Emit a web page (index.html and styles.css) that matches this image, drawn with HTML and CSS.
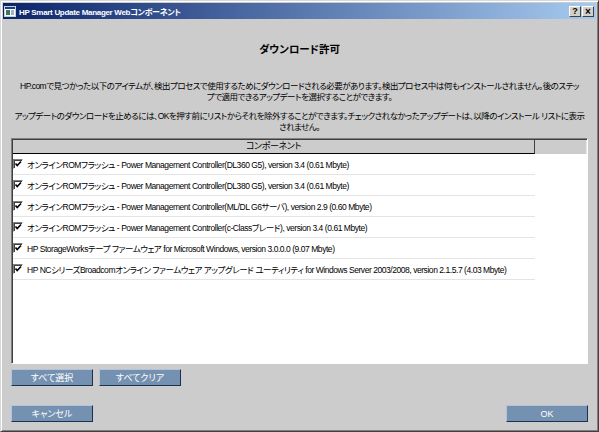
FILE: index.html
```html
<!DOCTYPE html>
<html lang="ja">

<head>
    <meta charset="UTF-8">
    <title>HP Smart Update Manager Webコンポーネント</title>
    <link rel="stylesheet" href="styles.css">
</head>

<body>
    <div class="window">
        <!-- Title bar -->
        <div class="titlebar">
            <svg class="app-icon" width="12" height="11" viewBox="0 0 12 11">
                <rect x="0.5" y="0.5" width="11" height="10" fill="#ffffff" stroke="#c8d0d8"/>
                <rect x="1" y="1" width="10" height="2" fill="#1a3c8c"/>
                <rect x="2" y="4" width="4" height="5" fill="#3a7a5a"/>
                <rect x="7" y="4" width="3" height="5" fill="#9cb4d0"/>
            </svg>
            <span class="title">HP Smart Update Manager Webコンポーネント</span>
            <div class="caption-buttons">
                <span class="cap-btn">?</span>
                <span class="cap-btn close">×</span>
            </div>
        </div>

        <div class="content">
            <h1>ダウンロード許可</h1>

            <p class="msg">HP.comで見つかった以下のアイテムが、検出プロセスで使用するためにダウンロードされる必要があります。検出プロセス中は何もインストールされません。後のステッ<br>プで適用できるアップデートを選択することができます。</p>
            <p class="msg">アップデートのダウンロードを止めるには、OKを押す前にリストからそれを除外することができます。チェックされなかったアップデートは、以降のインストール リストに表示<br>されません。</p>

            <div class="list">
                <div class="list-head">
                    <div class="col-name">コンポーネント</div>
                    <div class="col-rest"></div>
                </div>
                <div class="list-body">
                    <div class="row"><span class="check"></span>オンラインROMフラッシュ - Power Management Controller(DL360 G5), version 3.4 (0.61 Mbyte)</div>
                    <div class="row"><span class="check"></span>オンラインROMフラッシュ - Power Management Controller(DL380 G5), version 3.4 (0.61 Mbyte)</div>
                    <div class="row"><span class="check"></span>オンラインROMフラッシュ - Power Management Controller(ML/DL G6サーバ), version 2.9 (0.60 Mbyte)</div>
                    <div class="row"><span class="check"></span>オンラインROMフラッシュ - Power Management Controller(c-Classブレード), version 3.4 (0.61 Mbyte)</div>
                    <div class="row"><span class="check"></span>HP StorageWorksテープ ファームウェア for Microsoft Windows, version 3.0.0.0 (9.07 Mbyte)</div>
                    <div class="row"><span class="check"></span>HP NCシリーズBroadcomオンライン ファームウェア アップグレード ユーティリティ for Windows Server 2003/2008, version 2.1.5.7 (4.03 Mbyte)</div>
                </div>
            </div>

            <div class="select-buttons">
                <button class="btn">すべて選択</button>
                <button class="btn">すべてクリア</button>
            </div>

            <div class="footer">
                <button class="btn">キャンセル</button>
                <button class="btn">OK</button>
            </div>
        </div>
    </div>
</body>

</html>
```

FILE: styles.css
```css
/* Page */

body {
    margin: 0;
    font-family: 'Liberation Sans', 'Noto Sans CJK JP', sans-serif;
    font-feature-settings: "palt";
    font-size: 9px;
    letter-spacing: -0.35px;
    color: #000;
}

/* Dialog frame */

.window {
    width: 599px;
    height: 432px;
    box-sizing: border-box;
    background-color: #cccccc;
    border: 1px solid;
    border-color: #d8d8d8 #404040 #404040 #d8d8d8;
    box-shadow: inset 1px 1px #ffffff, inset -1px -1px #808080;
    padding: 2px;
    display: flex;
    flex-direction: column;
}

/* Title bar */

.titlebar {
    height: 16px;
    display: flex;
    align-items: center;
    padding: 0 2px 0 1px;
    background: linear-gradient(to right, #0a246a, #a6caf0);
    color: #fff;
    font-size: 8px;
    font-weight: bold;
    letter-spacing: -0.3px;
}

.app-icon {
    margin-right: 3px;
}

.title {
    flex: 1;
    white-space: nowrap;
}

.caption-buttons {
    display: flex;
    gap: 1px;
}

.cap-btn {
    width: 10px;
    height: 9px;
    background-color: #d4d0c8;
    border: 1px solid;
    border-color: #ffffff #404040 #404040 #ffffff;
    color: #000;
    font-size: 9px;
    line-height: 9px;
    letter-spacing: 0;
    text-align: center;
}

.cap-btn.close {
    font-size: 10px;
}

/* Content */

.content {
    flex: 1;
    display: flex;
    flex-direction: column;
    padding: 0 8px;
}

h1 {
    margin: 23px 0 0;
    font-size: 10.5px;
    line-height: 14px;
    letter-spacing: 0;
    text-align: center;
}

.msg {
    margin: 25px -4px 0;
    font-size: 8.5px;
    line-height: 11px;
    letter-spacing: -0.5px;
    text-align: center;
    white-space: nowrap;
}

.msg + .msg {
    margin-top: 8px;
}

/* Component list */

.list {
    margin-top: 5px;
    height: 226px;
    box-sizing: border-box;
    border: 1px solid;
    border-color: #808080 #ffffff #ffffff #808080;
    box-shadow: inset 1px 1px #404040;
    padding: 1px 0 0 1px;
    background-color: #ffffff;
    display: flex;
    flex-direction: column;
}

.list-head {
    display: flex;
    height: 14px;
    background-color: #cccccc;
}

.col-name {
    width: 522px;
    box-sizing: border-box;
    border-right: 1px solid #404040;
    border-bottom: 1px solid #000;
    text-align: center;
    line-height: 13px;
}

.col-rest {
    flex: 1;
    border-right: 1px solid #e8e8e8;
}

.row {
    width: 522px;
    height: 20px;
    border-bottom: 1px solid #e4e4e4;
    display: flex;
    align-items: center;
    white-space: nowrap;
    font-size: 8.5px;
    letter-spacing: -0.45px;
}

.check {
    width: 8px;
    height: 8px;
    margin: 0 4px 0 0;
    border: 1px solid;
    border-color: #808080 #ffffff #ffffff #808080;
    box-shadow: inset 1px 1px #404040;
    background: #fff url("data:image/svg+xml;utf8,<svg xmlns='http://www.w3.org/2000/svg' width='8' height='8'><path d='M1.5 3.5 L3.2 5.5 L7 1.5' fill='none' stroke='black' stroke-width='1.6'/></svg>") no-repeat center;
    flex-shrink: 0;
}

/* Buttons */

.btn {
    width: 82px;
    height: 17px;
    padding: 0;
    background-color: #7591b1;
    border: 1px solid;
    border-color: #b4c4d8 #1c3050 #1c3050 #b4c4d8;
    color: #fff;
    font-family: inherit;
    font-feature-settings: "palt";
    font-size: 9px;
    letter-spacing: 0;
    cursor: pointer;
}

.select-buttons {
    display: flex;
    gap: 6px;
    margin-top: 5px;
}

.footer {
    display: flex;
    justify-content: space-between;
    margin-top: 19px;
}
```
